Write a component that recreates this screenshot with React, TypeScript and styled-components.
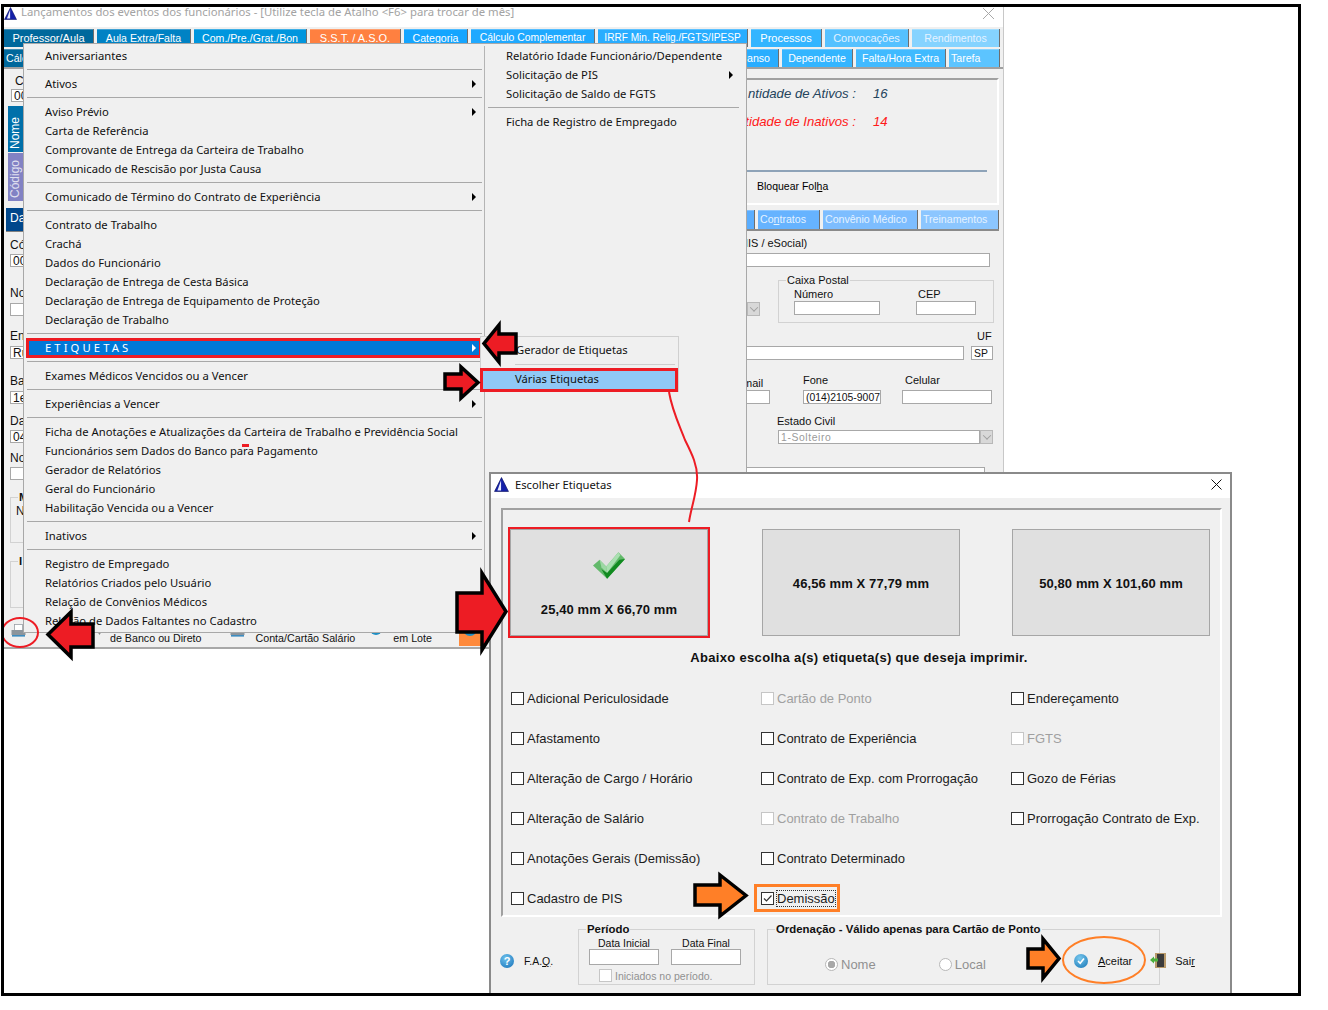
import React from "react";
import styled, { createGlobalStyle } from "styled-components";

const GlobalStyle = createGlobalStyle`
  html, body { margin: 0; padding: 0; background: #fff; }
  body { font-family: "Liberation Sans", Arial, sans-serif; font-size: 12px; color: #111; }
`;

const menuFont = `"Noto Sans", "Open Sans", sans-serif`;

const Frame = styled.div`
  position: relative;
  box-sizing: border-box;
  width: 1300px;
  height: 992px;
  margin: 4px 0 0 1px;
  border: 3px solid #000;
  background: #fff;
  overflow: hidden;
`;

/* janela principal */
const MainWindow = styled.div`
  box-sizing: border-box;
  width: 1000px;
  height: 642px;
  display: flex;
  flex-direction: column;
  background: #f0f0f0;
  border-bottom: 2px solid #a8a8a8;
  border-right: 1px solid #c8c8c8;
`;

const TitleBar = styled.div`
  height: 20px;
  flex: none;
  background: #fff;
  display: flex;
  align-items: flex-start;
  justify-content: space-between;
  padding: 0 8px 0 0;
  box-sizing: border-box;
  color: #a3a3a3;
  font-family: ${menuFont};
  font-size: 11.34px;
  line-height: 10px;
`;

const TitleLeft = styled.div`
  display: flex;
  align-items: flex-start;
  gap: 4px;
`;

const TabRow = styled.div<{ $mt?: number; $mr?: number }>`
  display: flex;
  gap: 3px;
  flex: none;
  height: 18px;
  margin-top: ${(p) => p.$mt ?? 0}px;
  margin-right: ${(p) => p.$mr ?? 0}px;
`;

const Tab = styled.div<{
  $w?: number;
  $bg: string;
  $grow?: boolean;
  $dim?: boolean;
  $start?: boolean;
  $fs?: number;
}>`
  box-sizing: border-box;
  width: ${(p) => (p.$w ? `${p.$w}px` : "auto")};
  flex: ${(p) => (p.$grow ? "1" : "none")};
  height: 100%;
  background: ${(p) => p.$bg};
  color: ${(p) => (p.$dim ? "#e4f2ff" : "#fff")};
  font-size: ${(p) => p.$fs ?? 10.6}px;
  line-height: 18px;
  white-space: nowrap;
  overflow: hidden;
  padding: 0 ${(p) => (p.$grow ? 8 : 2)}px 0 2px;
  text-align: ${(p) => (p.$start ? "left" : p.$grow ? "right" : "center")};
  border-right: 1px solid #6e6e6e;
  box-shadow: inset 0 1px 0 rgba(255, 255, 255, 0.25);
`;

const Body = styled.div`
  flex: 1;
  min-height: 0;
  display: flex;
  justify-content: space-between;
  border-top: 2px solid #a0a0a0;
`;

const LeftStrip = styled.div`
  width: 70px;
  flex: none;
  padding: 5px 0 0 4px;
  box-sizing: border-box;
  display: flex;
  flex-direction: column;
`;

const StripLabel = styled.div<{ $mt: number; $ml?: number }>`
  margin-top: ${(p) => p.$mt}px;
  margin-left: ${(p) => p.$ml ?? 2}px;
  line-height: 14px;
  font-size: 12px;
  white-space: nowrap;
`;

const StripInput = styled.div<{ $ml?: number; $mt: number }>`
  box-sizing: border-box;
  width: 60px;
  height: 13px;
  margin-left: ${(p) => p.$ml ?? 2}px;
  margin-top: ${(p) => p.$mt}px;
  background: #fff;
  border: 1px solid #a8a8a8;
  font-size: 12px;
  line-height: 12px;
  padding-left: 2px;
`;

const SideTab = styled.div<{ $bg: string; $h: number; $color: string; $mt: number }>`
  box-sizing: border-box;
  width: 15px;
  height: ${(p) => p.$h}px;
  margin-top: ${(p) => p.$mt}px;
  background: ${(p) => p.$bg};
  color: ${(p) => p.$color};
  writing-mode: vertical-rl;
  transform: rotate(180deg);
  font-size: 12px;
  line-height: 15px;
  text-align: left;
  padding-top: 3px;
`;

const DadosTab = styled.div`
  width: 60px;
  height: 23px;
  margin: 7px 0 0 -2px;
  background: #00478c;
  color: #fff;
  font-size: 12px;
  line-height: 21px;
  padding-left: 4px;
  border-bottom: 1px solid #808080;
`;

const RightColumn = styled.div`
  width: 400px;
  flex: none;
  margin-right: 3px;
  display: flex;
  flex-direction: column;
`;

const StatsPanel = styled.div`
  box-sizing: border-box;
  height: 127px;
  margin: 9px 1px 0 0;
  border-top: 2px solid #a0a0a0;
  border-right: 2px solid #fff;
  border-bottom: 2px solid #fff;
  padding-top: 7px;
  display: flex;
  flex-direction: column;
`;

const StatRow = styled.div<{ $red?: boolean; $mt?: number }>`
  display: flex;
  gap: 17px;
  height: 14px;
  line-height: 14px;
  margin-top: ${(p) => p.$mt ?? 0}px;
  font-style: italic;
  font-size: 13.2px;
  color: ${(p) => (p.$red ? "#ff1a1a" : "#24445c")};
`;

const StatLabel = styled.div`
  width: 256px;
  text-align: right;
  white-space: nowrap;
`;

const PanelRule = styled.div`
  height: 2px;
  margin: 41px 10px 0 0;
  background: #8ea3b8;
`;

const BlockLabel = styled.div`
  margin: 8px 0 0 157px;
  font-size: 10.5px;
  line-height: 13px;
  color: #000;
`;

const SubTabs = styled(TabRow)`
  height: 19px;
  margin-top: 5px;
  margin-right: 1px;
  box-shadow: 0 2px 0 #8a8a8a;
`;

const FieldLabel = styled.div<{ $mt: number; $ml: number }>`
  margin: ${(p) => p.$mt}px 0 0 ${(p) => p.$ml}px;
  line-height: 14px;
  font-size: 11px;
  white-space: nowrap;
`;

const TextBox = styled.div<{ $w: number; $disabled?: boolean; $mt?: number }>`
  box-sizing: border-box;
  width: ${(p) => p.$w}px;
  height: 14px;
  margin-top: ${(p) => p.$mt ?? 0}px;
  background: #fff;
  border: 1px solid #a8a8a8;
  font-size: 10.4px;
  line-height: 13px;
  padding-left: 2px;
  white-space: nowrap;
  overflow: hidden;
  color: ${(p) => (p.$disabled ? "#9a9a9a" : "#111")};
  letter-spacing: ${(p) => (p.$disabled ? "0.6px" : "0")};
  flex: none;
`;

const ComboButton = styled.div<{ $mt?: number }>`
  box-sizing: border-box;
  width: 13px;
  height: 14px;
  margin-top: ${(p) => p.$mt ?? 0}px;
  background: #d8d8d8;
  border: 1px solid #b8b8b8;
  display: flex;
  align-items: center;
  justify-content: center;
  flex: none;
`;

const ComboCaret = styled.span`
  width: 5px;
  height: 5px;
  border-right: 1px solid #a0a0a0;
  border-bottom: 1px solid #a0a0a0;
  transform: rotate(45deg) translate(-1px, -1px);
`;

const FieldRow = styled.div<{ $mt?: number; $pl?: number; $end?: boolean }>`
  display: flex;
  align-items: ${(p) => (p.$end ? "flex-end" : "flex-start")};
  margin-top: ${(p) => p.$mt ?? 0}px;
  padding-left: ${(p) => p.$pl ?? 0}px;
`;

const Stack = styled.div<{ $ml?: number; $w?: number }>`
  display: flex;
  flex-direction: column;
  margin-left: ${(p) => p.$ml ?? 0}px;
  width: ${(p) => (p.$w ? `${p.$w}px` : "auto")};
  flex: none;
`;

const Group = styled.fieldset<{ $w: number; $h: number; $ml?: number; $mt?: number; $bold?: boolean }>`
  box-sizing: border-box;
  width: ${(p) => p.$w}px;
  height: ${(p) => p.$h}px;
  margin: ${(p) => p.$mt ?? 0}px 0 0 ${(p) => p.$ml ?? 0}px;
  padding: 0;
  border: 1px solid #d2d2d2;
  flex: none;
  min-inline-size: 0;

  legend {
    margin-left: 7px;
    padding: 0 1px;
    font-size: ${(p) => (p.$bold ? "11.4px" : "11px")};
    font-weight: ${(p) => (p.$bold ? 700 : 400)};
    line-height: 13px;
    color: #111;
  }
`;

const Toolbar = styled.div`
  height: 22px;
  flex: none;
  display: flex;
  align-items: flex-end;
  padding: 0 0 1px 7px;
  font-size: 10.7px;
  line-height: 13px;
`;

const ToolText = styled.span<{ $ml: number }>`
  margin-left: ${(p) => p.$ml}px;
  white-space: nowrap;
  padding-bottom: 1px;
`;

const ToolIcon = styled.svg<{ $ml: number }>`
  margin: 0 0 9px ${(p) => p.$ml}px;
  flex: none;
`;

const OrangeBox = styled.div`
  width: 22px;
  height: 18px;
  margin-left: 27px;
  background: #ff8a3c;
  display: flex;
  justify-content: center;
`;

const OrangeDot = styled.div`
  width: 14px;
  height: 8px;
  border-radius: 0 0 8px 8px;
  background: #1e8fc4;
`;

/* menu suspenso */
const Menu = styled.div`
  position: absolute;
  left: 19px;
  top: 36px;
  width: 724px;
  height: 590px;
  box-sizing: border-box;
  display: flex;
  background: #f0f0f0;
  border: 1px solid #a8a8a8;
  padding-top: 2px;
  font-family: ${menuFont};
  font-size: 11.25px;
  color: #111;
  z-index: 2;
`;

const MenuColumn = styled.div<{ $w: number; $divider?: boolean }>`
  width: ${(p) => p.$w}px;
  flex: none;
  box-sizing: border-box;
  border-right: ${(p) => (p.$divider ? "1px solid #b4b4b4" : "0")};
  padding-left: 3px;
  padding-right: ${(p) => (p.$divider ? 2 : 7)}px;
`;

const MenuItem = styled.div<{ $pad: number }>`
  position: relative;
  height: 19px;
  line-height: 19px;
  padding-left: ${(p) => p.$pad}px;
  white-space: nowrap;
`;

const MenuSep = styled.div`
  height: 1px;
  margin: 4px 0;
  background: #a8a8a8;
`;

const MenuArrow = styled.span<{ $white?: boolean }>`
  position: absolute;
  right: 6px;
  top: 6px;
  border-left: 4px solid ${(p) => (p.$white ? "#fff" : "#000")};
  border-top: 4px solid transparent;
  border-bottom: 4px solid transparent;
`;

const HotItem = styled(MenuItem)`
  background: #0078d7;
  color: #fff;
  letter-spacing: 3.1px;
  box-shadow: inset 0 0 0 3px #ed1c24;
  height: 20px;
  line-height: 20px;
  margin: 0 0 -1px -1px;
  padding-left: 19px;
`;

const SubMenu = styled.div`
  position: absolute;
  left: 476px;
  top: 329px;
  width: 199px;
  height: 56px;
  box-sizing: border-box;
  background: #f0f0f0;
  border: 1px solid #d0d0d0;
  font-family: ${menuFont};
  font-size: 11.22px;
  color: #111;
  z-index: 3;
`;

const SubItem = styled.div`
  height: 27px;
  line-height: 25px;
  padding-left: 35px;
`;

const SubSep = styled.div`
  height: 1px;
  margin: 0 3px 0 34px;
  background: #cdcdcd;
`;

const SubHot = styled.div`
  box-sizing: border-box;
  height: 24px;
  margin: 3px 0 0 -1px;
  line-height: 16px;
  background: #90c8f6;
  border: 3px solid #ed1c24;
  padding-left: 32px;
`;

/* dialogo */
const Dialog = styled.div`
  position: absolute;
  left: 485px;
  top: 465px;
  width: 743px;
  height: 525px;
  box-sizing: border-box;
  border: 2px solid #8a8a8a;
  border-bottom: 0;
  background: #f0f0f0;
  display: flex;
  flex-direction: column;
  z-index: 4;
`;

const DialogTitle = styled.div`
  box-sizing: border-box;
  height: 24px;
  flex: none;
  background: #fff;
  display: flex;
  align-items: center;
  gap: 6px;
  padding: 0 8px 3px 3px;
  font-family: ${menuFont};
  font-size: 11.22px;
  color: #111;
`;

const CloseGlyph = styled.svg`
  margin-left: auto;
`;

const InnerPanel = styled.div`
  box-sizing: border-box;
  width: 721px;
  height: 409px;
  margin: 10px 0 0 10px;
  flex: none;
  border-top: 2px solid #a0a0a0;
  border-left: 2px solid #a0a0a0;
  border-right: 2px solid #fff;
  border-bottom: 2px solid #fff;
  padding: 19px 12px 0 7px;
`;

const SizeRow = styled.div`
  display: grid;
  grid-template-columns: 252px 250px 198px;
`;

const SizeButton = styled.div<{ $selected?: boolean }>`
  box-sizing: border-box;
  width: 198px;
  height: 107px;
  background: #e0e0e0;
  border: 1px solid #a6a6a6;
  display: flex;
  flex-direction: column;
  align-items: center;
  justify-content: ${(p) => (p.$selected ? "flex-end" : "center")};
  padding: ${(p) => (p.$selected ? "0 0 18px" : "2px 0 0")};
  font-size: 13px;
  font-weight: 700;
  letter-spacing: 0.1px;
  line-height: 15px;
  color: #111;
  outline: ${(p) => (p.$selected ? "2px solid #ed1c24" : "none")};
`;

const CheckIcon = styled.svg`
  margin-bottom: 23px;
`;

const PanelHeading = styled.div`
  margin: 14px 0 0 0;
  height: 15px;
  line-height: 15px;
  text-align: center;
  font-size: 13px;
  font-weight: 700;
  letter-spacing: 0.32px;
  color: #111;
`;

const OptionGrid = styled.div`
  display: grid;
  grid-template-columns: 250px 250px 197px;
  grid-auto-rows: 40px;
  margin: 13px 0 0 1px;
`;

const OptionCell = styled.div<{ $off?: boolean }>`
  display: flex;
  align-items: center;
  gap: 3px;
  font-size: 13px;
  color: ${(p) => (p.$off ? "#a0a0a0" : "#1c1c1c")};
  white-space: nowrap;
`;

const Box = styled.span<{ $off?: boolean }>`
  box-sizing: border-box;
  width: 13px;
  height: 13px;
  flex: none;
  display: inline-flex;
  align-items: center;
  justify-content: center;
  background: #fff;
  border: 1px solid ${(p) => (p.$off ? "#c6c6c6" : "#333")};
`;

const HighlightWrap = styled.div`
  position: relative;
  display: flex;
  align-items: center;
  gap: 3px;
  &::after {
    content: "";
    position: absolute;
    left: -7px;
    right: -5px;
    top: -7px;
    bottom: -6px;
    border: 3px solid #ff7f27;
    pointer-events: none;
  }
`;

const FocusLabel = styled.span`
  outline: 1px dotted #333;
  line-height: 15px;
`;

const Footer = styled.div`
  flex: 1;
  min-height: 0;
  display: flex;
  align-items: flex-start;
  padding-top: 6px;
`;

const Faq = styled.div`
  display: flex;
  align-items: center;
  gap: 10px;
  margin: 31px 0 0 9px;
  width: 78px;
  flex: none;
  font-size: 10.5px;
`;

const HelpDot = styled.span`
  width: 14px;
  height: 14px;
  border-radius: 50%;
  background: radial-gradient(circle at 40% 30%, #6cc0ec, #1671b8);
  color: #fff;
  font-size: 11px;
  font-weight: 700;
  line-height: 14px;
  text-align: center;
  flex: none;
`;

const PeriodBody = styled.div`
  display: grid;
  grid-template-columns: 70px 70px;
  column-gap: 12px;
  padding: 1px 0 0 10px;
  font-size: 10.5px;
  text-align: center;
`;

const PeriodInput = styled.div`
  box-sizing: border-box;
  height: 16px;
  background: #fff;
  border: 1px solid #a8a8a8;
`;

const PeriodCheck = styled.div`
  grid-column: 1 / 3;
  display: flex;
  align-items: center;
  gap: 3px;
  margin: 4px 0 0 10px;
  color: #909090;
  font-size: 10.5px;
`;

const RadioRow = styled.div`
  display: flex;
  padding: 21px 0 0 57px;
  gap: 63px;
  font-size: 13px;
  color: #909090;
`;

const Radio = styled.label`
  display: flex;
  align-items: center;
  gap: 3px;
`;

const RadioDot = styled.span<{ $on?: boolean }>`
  box-sizing: border-box;
  width: 13px;
  height: 13px;
  border-radius: 50%;
  border: 1px solid #b8b8b8;
  background: ${(p) =>
    p.$on ? "radial-gradient(circle, #a8a8a8 0 3.5px, #fff 4px)" : "#fff"};
`;

const ActionLink = styled.div<{ $ml: number; $mt: number }>`
  display: flex;
  align-items: center;
  margin: ${(p) => p.$mt}px 0 0 ${(p) => p.$ml}px;
  font-size: 11px;
  flex: none;
`;

const ActionDot = styled.span`
  width: 14px;
  height: 14px;
  border-radius: 50%;
  margin-right: 10px;
  background: radial-gradient(circle at 40% 30%, #78c8ee, #1674b4);
  display: inline-flex;
  align-items: center;
  justify-content: center;
`;

const DoorIcon = styled.svg`
  margin-right: 9px;
`;

/* anotacoes sobre a captura */
const Shape = styled.svg<{ $x: number; $y: number }>`
  position: absolute;
  left: ${(p) => p.$x - 4}px;
  top: ${(p) => p.$y - 7}px;
  overflow: visible;
  z-index: 6;
  pointer-events: none;
`;

const Ring = styled.div<{ $x: number; $y: number; $w: number; $h: number; $color: string }>`
  position: absolute;
  left: ${(p) => p.$x - 4}px;
  top: ${(p) => p.$y - 7}px;
  width: ${(p) => p.$w}px;
  height: ${(p) => p.$h}px;
  box-sizing: border-box;
  border: 2.5px solid ${(p) => p.$color};
  border-radius: 50%;
  z-index: 5;
`;

const RedTick = styled.div`
  position: absolute;
  left: 238px;
  top: 437px;
  width: 7px;
  height: 3px;
  background: #ed1c24;
  z-index: 5;
`;

type ArrowProps = {
  x: number;
  y: number;
  w: number;
  h: number;
  head: number;
  shaftTop: number;
  shaftBottom: number;
  color: string;
  left?: boolean;
};

// seta gigante das anotacoes: ponta, base da cabeca e haste em pixels
const Arrow = ({ x, y, w, h, head, shaftTop, shaftBottom, color, left }: ArrowProps) => {
  const pts = [
    [0, shaftTop],
    [w - head, shaftTop],
    [w - head, 0],
    [w, h / 2],
    [w - head, h],
    [w - head, shaftBottom],
    [0, shaftBottom],
  ]
    .map(([a, b]) => `${left ? w - a : a},${b}`)
    .join(" ");
  return (
    <Shape $x={x} $y={y} width={w} height={h}>
      <polygon points={pts} fill={color} stroke="#000" strokeWidth={3.5} strokeLinejoin="miter" />
    </Shape>
  );
};

const AppIcon = ({ size }: { size: number }) => (
  <svg width={size} height={size} viewBox="0 0 14 14">
    <polygon points="7,0.5 13.5,13.5 0.5,13.5" fill="#1420a8" stroke="#0a0f60" strokeWidth="0.6" />
    <polygon points="6.6,3 3.2,12.5 6.6,12.5" fill="#e8ecff" />
  </svg>
);

const Printer = () => (
  <>
    <rect x="3.5" y="0.5" width="8" height="6" fill="#ffffff" stroke="#9aa0a6" strokeWidth="0.8" />
    <rect x="0.5" y="6" width="14" height="5" fill="#8d959c" />
    <rect x="1" y="11" width="13" height="1.6" fill="#3d8cc0" />
  </>
);

const tabs1 = [
  { t: "Professor/Aula", w: 90, bg: "#00689c", fs: 11 },
  { t: "Aula Extra/Falta", w: 94, bg: "#0082c4" },
  { t: "Com./Pre./Grat./Bon", w: 113, bg: "#0096de" },
  { t: "S.S.T. / A.S.O.", w: 91, bg: "#ff8040", fs: 11 },
  { t: "Categoria", w: 64, bg: "#14a5ff" },
  { t: "Cálculo Complementar", w: 124, bg: "#1fa9ff", fs: 10.4 },
  { t: "IRRF Min. Relig./FGTS/IPESP", w: 150, bg: "#29adff", fs: 10.1 },
  { t: "Processos", w: 71, bg: "#33b5ff", fs: 11 },
  { t: "Convocações", w: 84, bg: "#55c1ff", dim: true, fs: 11 },
  { t: "Rendimentos", w: 88, bg: "#85d3ff", dim: true },
];

type Entry = { t: string; arrow?: boolean; hot?: boolean } | "sep";

const menuLeft: Entry[] = [
  { t: "Aniversariantes" },
  "sep",
  { t: "Ativos", arrow: true },
  "sep",
  { t: "Aviso Prévio", arrow: true },
  { t: "Carta de Referência" },
  { t: "Comprovante de Entrega da Carteira de Trabalho" },
  { t: "Comunicado de Rescisão por Justa Causa" },
  "sep",
  { t: "Comunicado de Término do Contrato de Experiência", arrow: true },
  "sep",
  { t: "Contrato de Trabalho" },
  { t: "Crachá" },
  { t: "Dados do Funcionário" },
  { t: "Declaração de Entrega de Cesta Básica" },
  { t: "Declaração de Entrega de Equipamento de Proteção" },
  { t: "Declaração de Trabalho" },
  "sep",
  { t: "ETIQUETAS", arrow: true, hot: true },
  "sep",
  { t: "Exames Médicos Vencidos ou a Vencer" },
  "sep",
  { t: "Experiências a Vencer", arrow: true },
  "sep",
  { t: "Ficha de Anotações e Atualizações da Carteira de Trabalho e Previdência Social" },
  { t: "Funcionários sem Dados do Banco para Pagamento" },
  { t: "Gerador de Relatórios" },
  { t: "Geral do Funcionário" },
  { t: "Habilitação Vencida ou a Vencer" },
  "sep",
  { t: "Inativos", arrow: true },
  "sep",
  { t: "Registro de Empregado" },
  { t: "Relatórios Criados pelo Usuário" },
  { t: "Relação de Convênios Médicos" },
  { t: "Relação de Dados Faltantes no Cadastro" },
];

const menuRight: Entry[] = [
  { t: "Relatório Idade Funcionário/Dependente" },
  { t: "Solicitação de PIS", arrow: true },
  { t: "Solicitação de Saldo de FGTS" },
  "sep",
  { t: "Ficha de Registro de Empregado" },
];

const options = [
  { t: "Adicional Periculosidade" },
  { t: "Cartão de Ponto", off: true },
  { t: "Endereçamento" },
  { t: "Afastamento" },
  { t: "Contrato de Experiência" },
  { t: "FGTS", off: true },
  { t: "Alteração de Cargo / Horário" },
  { t: "Contrato de Exp. com Prorrogação" },
  { t: "Gozo de Férias" },
  { t: "Alteração de Salário" },
  { t: "Contrato de Trabalho", off: true },
  { t: "Prorrogação Contrato de Exp." },
  { t: "Anotações Gerais (Demissão)" },
  { t: "Contrato Determinado" },
  { t: "" },
  { t: "Cadastro de PIS" },
];

const renderEntries = (list: Entry[], pad: number) =>
  list.map((e, i) => {
    if (e === "sep") return <MenuSep key={i} />;
    if (e.hot)
      return (
        <HotItem key={i} $pad={pad}>
          {e.t}
          <MenuArrow $white />
        </HotItem>
      );
    return (
      <MenuItem key={i} $pad={pad}>
        {e.t}
        {e.arrow && <MenuArrow />}
      </MenuItem>
    );
  });

const App = () => {
  return (
    <Frame>
      <GlobalStyle />
      <MainWindow>
        <TitleBar>
          <TitleLeft>
            <AppIcon size={13} />
            Lançamentos dos eventos dos funcionários - [Utilize tecla de Atalho &lt;F6&gt; para trocar de mês]
          </TitleLeft>
          <svg width="13" height="13" viewBox="0 0 13 13">
            <path d="M1 1 L12 12 M12 1 L1 12" stroke="#a8a8a8" strokeWidth="1" />
          </svg>
        </TitleBar>
        <TabRow $mt={2}>
          {tabs1.map((tab) => (
            <Tab key={tab.t} $w={tab.w} $bg={tab.bg} $dim={tab.dim} $fs={tab.fs}>
              {tab.t}
            </Tab>
          ))}
        </TabRow>
        <TabRow $mt={2} $mr={3}>
          <Tab $w={130} $bg="#00689c" $start>
            Cálc
          </Tab>
          <Tab $grow $bg="#29adff">
            anso
          </Tab>
          <Tab $w={71} $bg="#33b5ff">
            Dependente
          </Tab>
          <Tab $w={90} $bg="#40baff">
            Falta/Hora Extra
          </Tab>
          <Tab $w={51} $bg="#5cc4ff" $start>
            Tarefa
          </Tab>
        </TabRow>
        <Body>
          <LeftStrip>
            <StripLabel $mt={0} $ml={7}>
              C
            </StripLabel>
            <StripInput $ml={3} $mt={1}>
              00
            </StripInput>
            <SideTab $bg="#0070aa" $color="#fff" $h={46} $mt={4}>
              Nome
            </SideTab>
            <SideTab $bg="#8282c4" $color="#e0e0f0" $h={48} $mt={1}>
              Código
            </SideTab>
            <DadosTab>Da</DadosTab>
            <StripLabel $mt={6}>Có</StripLabel>
            <StripInput $mt={2}>00</StripInput>
            <StripLabel $mt={19}>No</StripLabel>
            <StripInput $mt={3} />
            <StripLabel $mt={13}>En</StripLabel>
            <StripInput $mt={3}>Ru</StripInput>
            <StripLabel $mt={15}>Ba</StripLabel>
            <StripInput $mt={3}>1e</StripInput>
            <StripLabel $mt={10}>Da</StripLabel>
            <StripInput $mt={2}>04</StripInput>
            <StripLabel $mt={8}>No</StripLabel>
            <StripInput $mt={2} />
            <Group $w={60} $h={52} $ml={2} $mt={11} $bold>
              <legend>M</legend>
              <StripLabel $mt={0} $ml={5}>
                N
              </StripLabel>
            </Group>
            <Group $w={60} $h={53} $ml={2} $mt={12} $bold>
              <legend>I</legend>
            </Group>
          </LeftStrip>
          <RightColumn>
            <StatsPanel>
              <StatRow>
                <StatLabel>ntidade de Ativos :</StatLabel>
                <span>16</span>
              </StatRow>
              <StatRow $red $mt={14}>
                <StatLabel>tidade de Inativos :</StatLabel>
                <span>14</span>
              </StatRow>
              <PanelRule />
              <BlockLabel>
                Bloquear Fol
                <u>h</u>a
              </BlockLabel>
            </StatsPanel>
            <SubTabs>
              <Tab $grow $bg="#59adff">
                {" "}
              </Tab>
              <Tab $w={62} $bg="#66b3ff" $dim $start>
                Co<u>n</u>tratos
              </Tab>
              <Tab $w={95} $bg="#7dbdff" $dim $start>
                Convênio Médico
              </Tab>
              <Tab $w={78} $bg="#8cc6ff" $dim $start>
                Treinamentos
              </Tab>
            </SubTabs>
            <FieldLabel $mt={7} $ml={140}>
              NIS / eSocial)
            </FieldLabel>
            <FieldRow $mt={3}>
              <TextBox $w={390} />
            </FieldRow>
            <FieldRow $mt={7} $pl={147}>
              <ComboButton $mt={28}>
                <ComboCaret />
              </ComboButton>
              <Group $w={216} $h={49} $ml={18}>
                <legend>Caixa Postal</legend>
                <FieldRow>
                  <Stack $ml={15}>
                    <FieldLabel $mt={0} $ml={0}>
                      Número
                    </FieldLabel>
                    <TextBox $w={86} />
                  </Stack>
                  <Stack $ml={36}>
                    <FieldLabel $mt={0} $ml={2}>
                      CEP
                    </FieldLabel>
                    <TextBox $w={60} />
                  </Stack>
                </FieldRow>
              </Group>
            </FieldRow>
            <FieldRow $mt={6} $end>
              <TextBox $w={364} />
              <Stack $ml={7}>
                <FieldLabel $mt={0} $ml={6}>
                  UF
                </FieldLabel>
                <TextBox $w={22} $mt={3}>
                  SP
                </TextBox>
              </Stack>
            </FieldRow>
            <FieldRow $mt={13}>
              <Stack>
                <FieldLabel $mt={3} $ml={143}>
                  mail
                </FieldLabel>
                <TextBox $w={170} />
              </Stack>
              <Stack $ml={33}>
                <FieldLabel $mt={0} $ml={0}>
                  Fone
                </FieldLabel>
                <TextBox $w={78} $mt={3}>
                  (014)2105-9007
                </TextBox>
              </Stack>
              <Stack $ml={21}>
                <FieldLabel $mt={0} $ml={3}>
                  Celular
                </FieldLabel>
                <TextBox $w={90} $mt={3} />
              </Stack>
            </FieldRow>
            <FieldLabel $mt={10} $ml={177}>
              Estado Civil
            </FieldLabel>
            <FieldRow $mt={2} $pl={178}>
              <TextBox $w={202} $disabled>
                1-Solteiro
              </TextBox>
              <ComboButton>
                <ComboCaret />
              </ComboButton>
            </FieldRow>
            <FieldRow $mt={23}>
              <TextBox $w={385} />
            </FieldRow>
          </RightColumn>
        </Body>
        <Toolbar>
          <ToolIcon $ml={0} width="15" height="13" viewBox="0 0 15 13">
            <Printer />
          </ToolIcon>
          <ToolIcon $ml={67} width="13" height="11" viewBox="0 0 13 11">
            <polygon points="1,0 12,0 6.5,9" fill="#8a8a8a" />
          </ToolIcon>
          <ToolText $ml={4}>de Banco ou Direto</ToolText>
          <ToolIcon $ml={28} width="15" height="13" viewBox="0 0 15 13">
            <Printer />
          </ToolIcon>
          <ToolText $ml={11}>Conta/Cartão Salário</ToolText>
          <ToolIcon $ml={14} width="14" height="11" viewBox="0 0 14 11">
            <circle cx="7" cy="3" r="6" fill="#1e8fc4" />
          </ToolIcon>
          <ToolText $ml={10}>em Lote</ToolText>
          <OrangeBox>
            <OrangeDot />
          </OrangeBox>
        </Toolbar>
      </MainWindow>

      <Menu>
        <MenuColumn $w={461} $divider>
          {renderEntries(menuLeft, 18)}
        </MenuColumn>
        <MenuColumn $w={261}>{renderEntries(menuRight, 18)}</MenuColumn>
      </Menu>

      <SubMenu>
        <SubItem>Gerador de Etiquetas</SubItem>
        <SubSep />
        <SubHot>Várias Etiquetas</SubHot>
      </SubMenu>

      <Dialog>
        <DialogTitle>
          <AppIcon size={15} />
          Escolher Etiquetas
          <CloseGlyph width="11" height="11" viewBox="0 0 11 11">
            <path d="M0.5 0.5 L10.5 10.5 M10.5 0.5 L0.5 10.5" stroke="#111" strokeWidth="1" />
          </CloseGlyph>
        </DialogTitle>
        <InnerPanel>
          <SizeRow>
            <SizeButton $selected>
              <CheckIcon width="32" height="27" viewBox="0 0 34 28">
                <polygon points="0,14 7,8 14,15 27,0 34,7 15,28" fill="#63b96b" />
                <polygon points="7,8 14,15 15,22 9,16" fill="#9cd8a4" />
                <polygon points="14,15 27,0 29,3 15,22" fill="#a9dfb0" />
                <polygon points="9,18 15,22 28,8 34,7 15,28" fill="#118a20" />
              </CheckIcon>
              25,40 mm X 66,70 mm
            </SizeButton>
            <SizeButton>46,56 mm X 77,79 mm</SizeButton>
            <SizeButton>50,80 mm X 101,60 mm</SizeButton>
          </SizeRow>
          <PanelHeading>Abaixo escolha a(s) etiqueta(s) que deseja imprimir.</PanelHeading>
          <OptionGrid>
            {options.map((o, i) => (
              <OptionCell key={i} $off={o.off}>
                {o.t && <Box $off={o.off} />}
                {o.t}
              </OptionCell>
            ))}
            <OptionCell>
              <HighlightWrap>
                <Box>
                  <svg width="11" height="11" viewBox="0 0 11 11">
                    <path d="M2 5.5 L4.5 8 L9.5 2.5" stroke="#333" strokeWidth="1.2" fill="none" />
                  </svg>
                </Box>
                <FocusLabel>Demissão</FocusLabel>
              </HighlightWrap>
            </OptionCell>
          </OptionGrid>
        </InnerPanel>
        <Footer>
          <Faq>
            <HelpDot>?</HelpDot>
            <span>
              F.A.<u>Q</u>.
            </span>
          </Faq>
          <Group $w={177} $h={62} $bold>
            <legend>Período</legend>
            <PeriodBody>
              <span>Data Inicial</span>
              <span>Data Final</span>
              <PeriodInput />
              <PeriodInput />
              <PeriodCheck>
                <Box $off />
                Iniciados no período.
              </PeriodCheck>
            </PeriodBody>
          </Group>
          <Group $w={393} $h={62} $ml={12} $bold>
            <legend>Ordenação - Válido apenas para Cartão de Ponto</legend>
            <RadioRow>
              <Radio>
                <RadioDot $on />
                Nome
              </Radio>
              <Radio>
                <RadioDot />
                Local
              </Radio>
            </RadioRow>
          </Group>
          <ActionLink $ml={-86} $mt={31}>
            <ActionDot>
              <svg width="8" height="8" viewBox="0 0 8 8">
                <path d="M1 4 L3.2 6.2 L7 1.5" stroke="#fff" strokeWidth="1.6" fill="none" />
              </svg>
            </ActionDot>
            <span>
              <u>A</u>ceitar
            </span>
          </ActionLink>
          <ActionLink $ml={18} $mt={30}>
            <DoorIcon width="16" height="15" viewBox="0 0 16 15">
              <rect x="5" y="0" width="11" height="15" fill="#b99a6a" />
              <rect x="7" y="1" width="7" height="13" fill="#3b3b3b" />
              <polygon points="0,7 4,3.5 4,5.5 8,5.5 8,8.5 4,8.5 4,10.5" fill="#4caf3c" />
            </DoorIcon>
            <span>
              Sai<u>r</u>
            </span>
          </ActionLink>
        </Footer>
      </Dialog>

      <RedTick />
      <Ring $x={1} $y={617} $w={38} $h={31} $color="#ed1c24" />
      <Ring $x={1062} $y={936} $w={84} $h={48} $color="#ff7f27" />
      <Shape $x={660} $y={388} width="50" height="140">
        <path
          d="M9 4 C12 22 18 34 25 52 C32 66 38 78 37 92 C36 108 31 120 29 134"
          fill="none"
          stroke="#ed1c24"
          strokeWidth="2"
        />
      </Shape>
      <Arrow x={484} y={325} w={32} h={37} head={15} shaftTop={9} shaftBottom={28} color="#ed1c24" left />
      <Arrow x={445} y={367} w={33} h={31} head={17} shaftTop={7} shaftBottom={22} color="#ed1c24" />
      <Arrow x={457} y={573} w={49} h={77} head={24} shaftTop={20} shaftBottom={59} color="#ed1c24" />
      <Arrow x={48} y={612} w={45} h={45} head={23} shaftTop={12} shaftBottom={35} color="#ed1c24" left />
      <Arrow x={695} y={875} w={51} h={41} head={26} shaftTop={10} shaftBottom={30} color="#ff7f27" />
      <Arrow x={1028} y={939} w={31} h={39} head={16} shaftTop={10} shaftBottom={29} color="#ff7f27" />
    </Frame>
  );
};

export default App;
